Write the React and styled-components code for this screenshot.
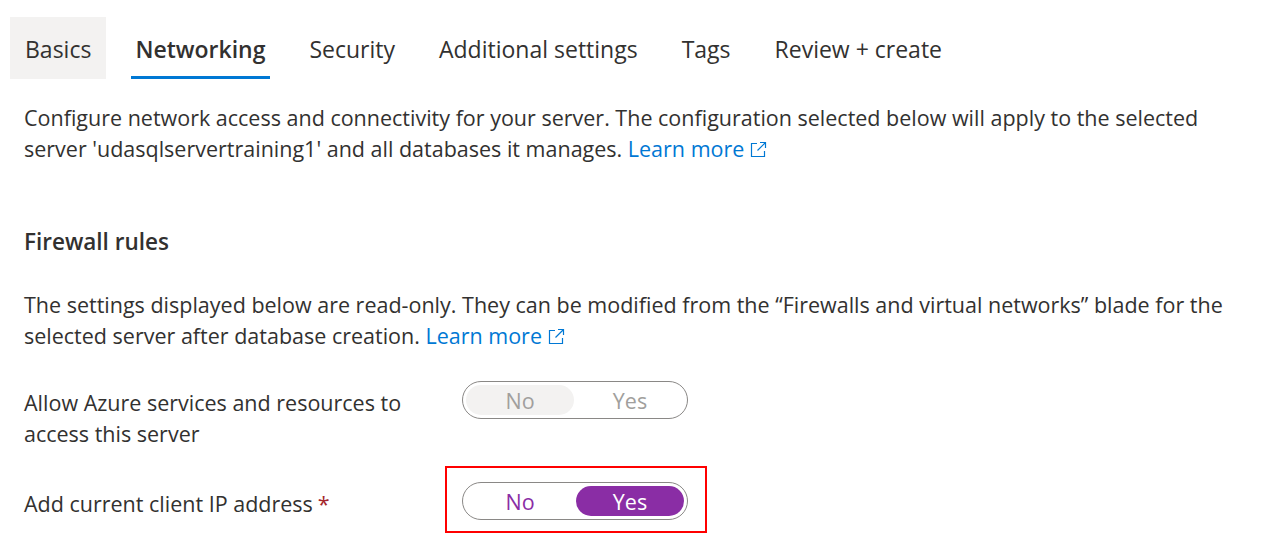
import React from "react";
import styled, { createGlobalStyle, css } from "styled-components";

const Global = createGlobalStyle`
  body {
    margin: 0;
    background: #fff;
    font-family: "Open Sans", "Noto Sans", sans-serif;
    color: #323130;
  }
`;

const Page = styled.div`
  box-sizing: border-box;
  min-height: 554px;
  padding: 17px 0 0 10px;
  width: 1240px;
`;

const Tabs = styled.div`
  display: flex;
  gap: 14px;
  height: 62px;
`;

const Tab = styled.div`
  position: relative;
  display: flex;
  align-items: center;
  padding: 2px 15px 0;
  font-size: 23px;
  font-weight: ${(p) => (p.$active ? 600 : 400)};
  color: #323130;
  background: ${(p) => (p.$hover ? "#f3f2f1" : "transparent")};
  ${(p) =>
    p.$active &&
    css`
      &::after {
        content: "";
        position: absolute;
        left: 11px;
        right: 10px;
        bottom: 0;
        height: 3px;
        background: #0078d4;
      }
    `}
`;

const Body = styled.div`
  padding-left: 14px;
`;

const Text = styled.p`
  margin: ${(p) => p.$mt || 0}px 0 0;
  font-size: 21.5px;
  line-height: 31px;
`;

const Heading = styled.h2`
  margin: 62px 0 0;
  font-size: 22.5px;
  line-height: 31px;
  font-weight: 600;
`;

const Link = styled.a`
  color: #0078d4;
  text-decoration: none;
  white-space: nowrap;
`;

const Icon = styled.svg`
  margin-left: 6px;
  vertical-align: -1px;
`;

const Row = styled.div`
  display: grid;
  grid-template-columns: 438px auto;
  align-items: start;
  margin-top: ${(p) => p.$mt}px;
`;

const Label = styled.div`
  padding-top: 6px;
  font-size: 21.5px;
  line-height: 31px;
  width: 405px;
`;

const Star = styled.span`
  color: #a4262c;
  margin-left: 5px;
`;

const Highlight = styled.div`
  position: relative;
  justify-self: start;
  &::after {
    content: "";
    position: absolute;
    inset: -16px -19px -13px -17px;
    border: 2px solid #ff0000;
    pointer-events: none;
  }
`;

const Toggle = styled.div`
  box-sizing: border-box;
  width: 226px;
  height: 38px;
  border: 1px solid #8a8886;
  border-radius: 19px;
  padding: 3px;
  display: grid;
  grid-template-columns: 1fr 1fr;
  gap: 2px;
`;

const Option = styled.div`
  display: flex;
  align-items: center;
  justify-content: center;
  border-radius: 16px;
  font-size: 21.5px;
  ${(p) =>
    p.$disabled
      ? css`
          color: #a19f9d;
          background: ${p.$on ? "#f3f2f1" : "transparent"};
        `
      : css`
          color: ${p.$on ? "#fff" : "#8a2da5"};
          background: ${p.$on ? "#8a2da5" : "transparent"};
        `}
`;

const External = () => (
  <Icon width="17" height="17" viewBox="0 0 17 17" fill="none" stroke="#0078d4" strokeWidth="1.2">
    <path d="M7 2.5H1.5v13h13V10" />
    <path d="M10 1.5h5.5V7M15.5 1.5 7.5 9.5" />
  </Icon>
);

function ToggleGroup({ value, disabled }) {
  return (
    <Toggle>
      <Option $disabled={disabled} $on={value === "No"}>No</Option>
      <Option $disabled={disabled} $on={value === "Yes"}>Yes</Option>
    </Toggle>
  );
}

export default function App() {
  const tabs = ["Basics", "Networking", "Security", "Additional settings", "Tags", "Review + create"];
  return (
    <>
      <Global />
      <Page>
        <Tabs>
          {tabs.map((t, i) => (
            <Tab key={t} $hover={i === 0} $active={i === 1}>
              {t}
            </Tab>
          ))}
        </Tabs>
        <Body>
          <Text $mt={23}>
            Configure network access and connectivity for your server. The configuration selected below will apply to the selected
            server 'udasqlservertraining1' and all databases it manages.{" "}
            <Link href="#">Learn more</Link>
            <External />
          </Text>
          <Heading>Firewall rules</Heading>
          <Text $mt={32}>
            The settings displayed below are read-only. They can be modified from the “Firewalls and virtual networks” blade for the
            selected server after database creation.{" "}
            <Link href="#">Learn more</Link>
            <External />
          </Text>
          <Row $mt={30}>
            <Label>Allow Azure services and resources to access this server</Label>
            <ToggleGroup value="No" disabled />
          </Row>
          <Row $mt={33}>
            <Label>
              Add current client IP address<Star>*</Star>
            </Label>
            <Highlight>
              <ToggleGroup value="Yes" />
            </Highlight>
          </Row>
        </Body>
      </Page>
    </>
  );
}
